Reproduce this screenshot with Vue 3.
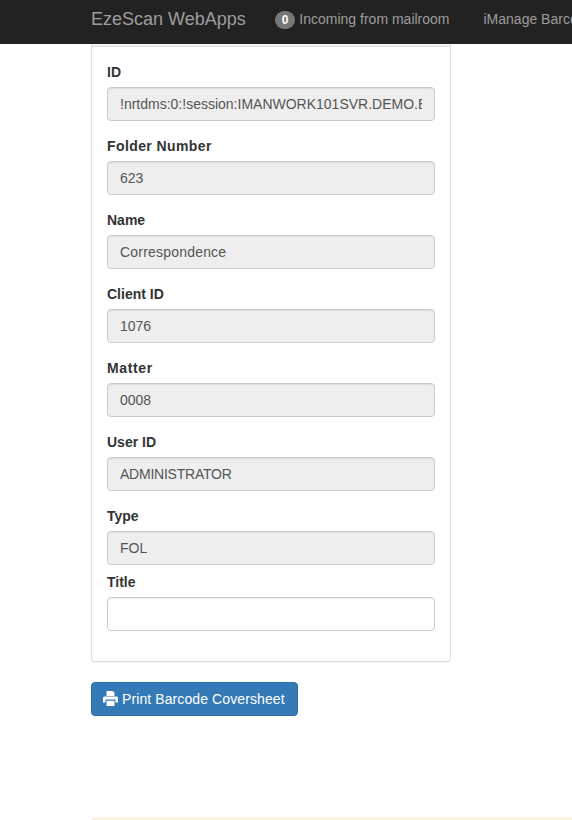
<template>
  <div class="page">
    <nav class="navbar">
      <a class="brand" href="#">EzeScan WebApps</a>
      <a class="nav-link" href="#"><span class="badge">0</span> Incoming from mailroom</a>
      <a class="nav-link" href="#">iManage Barcode</a>
    </nav>

    <div class="content">
      <div class="panel">
        <div class="panel-heading"></div>
        <div class="panel-body">
          <div v-for="field in fields" :key="field.label" class="form-group" :class="{ tight: field.tight }">
            <label :style="{ letterSpacing: field.labelTrack }">{{ field.label }}</label>
            <input
              class="form-control"
              type="text"
              :value="field.value"
              :readonly="field.readonly"
              :style="{ letterSpacing: field.valueTrack }"
            />
          </div>
        </div>
      </div>

      <button class="btn" type="button">
        <svg class="print-icon" width="15" height="15" viewBox="0 0 15 15" fill="currentColor">
          <path d="M3.5 0h6.2l1.8 1.8V5h-8z" />
          <path
            fill-rule="evenodd"
            d="M1.5 5.5h12c0.8 0 1.5 0.7 1.5 1.5v4.5h-2.5V8.5h-10v3H0V7c0-0.8 0.7-1.5 1.5-1.5z"
          />
          <path d="M3.5 9.8h8V15h-8z" />
        </svg>
        Print Barcode Coversheet
      </button>

      <div class="alert-edge"></div>
    </div>
  </div>
</template>

<script setup>
const fields = [
  { label: 'ID', value: '!nrtdms:0:!session:IMANWORK101SVR.DEMO.EZESCAN.NET:!folder:ordinary,623', readonly: true },
  { label: 'Folder Number', value: '623', readonly: true, labelTrack: '0.4px' },
  { label: 'Name', value: 'Correspondence', readonly: true, valueTrack: '0.2px' },
  { label: 'Client ID', value: '1076', readonly: true },
  { label: 'Matter', value: '0008', readonly: true, labelTrack: '0.65px' },
  { label: 'User ID', value: 'ADMINISTRATOR', readonly: true, valueTrack: '-0.23px' },
  { label: 'Type', value: 'FOL', readonly: true, tight: true },
  { label: 'Title', value: '', readonly: false }
];
</script>

<style>
html,
body {
  margin: 0;
  background: #fff;
}
</style>

<style scoped>
.page {
  width: 572px;
  height: 820px;
  overflow: hidden;
  font-family: "Liberation Sans", Arial, sans-serif;
  font-size: 14px;
  line-height: 20px;
  color: #333;
}

.navbar {
  display: flex;
  align-items: center;
  height: 44px;
  background: #222;
  white-space: nowrap;
  padding-left: 76px;
}

.brand {
  padding: 0 15px;
  margin-right: -1px;
  font-size: 18px;
  color: #9d9d9d;
  text-decoration: none;
  margin-top: -6px;
}

.nav-link {
  padding: 0 15px;
  margin-right: 4px;
  color: #9d9d9d;
  text-decoration: none;
  margin-top: -6px;
}

.badge {
  display: inline-block;
  box-sizing: border-box;
  min-width: 10px;
  padding: 3px 7px;
  font-size: 12px;
  font-weight: 700;
  line-height: 1;
  color: #fff;
  text-align: center;
  vertical-align: middle;
  background: #777;
  border-radius: 10px;
}

.content {
  padding-left: 91px;
}

.panel {
  width: 360px;
  box-sizing: border-box;
  border: 1px solid #ddd;
  border-top: 0;
  border-radius: 0 0 4px 4px;
  box-shadow: 0 1px 1px rgba(0, 0, 0, 0.05);
}

.panel-heading {
  height: 2px;
  background: #f5f5f5;
  border-bottom: 1px solid #ddd;
}

.panel-body {
  padding: 15px;
}

.form-group {
  margin-bottom: 15px;
}

.form-group.tight {
  margin-bottom: 7px;
}

label {
  display: block;
  margin-bottom: 5px;
  font-weight: 700;
}

.form-control {
  display: block;
  width: 100%;
  height: 34px;
  box-sizing: border-box;
  padding: 6px 12px;
  font-family: inherit;
  font-size: 14px;
  line-height: 20px;
  color: #555;
  background: #fff;
  border: 1px solid #ccc;
  border-radius: 4px;
  box-shadow: inset 0 1px 1px rgba(0, 0, 0, 0.075);
  outline: none;
}

.form-control:read-only {
  background: #eee;
}

.btn {
  display: block;
  margin-top: 20px;
  height: 34px;
  padding: 6px 12px;
  font-family: inherit;
  font-size: 14px;
  line-height: 20px;
  letter-spacing: 0.1px;
  color: #fff;
  background: #337ab7;
  border: 1px solid #2e6da4;
  border-radius: 4px;
}

.print-icon {
  margin-left: -1px;
  vertical-align: -2px;
}

.alert-edge {
  margin-top: 102px;
  height: 12px;
  background: #fcf8e3;
  border: 1px solid #faebcc;
  border-right: 0;
  border-radius: 4px 0 0 0;
}
</style>
